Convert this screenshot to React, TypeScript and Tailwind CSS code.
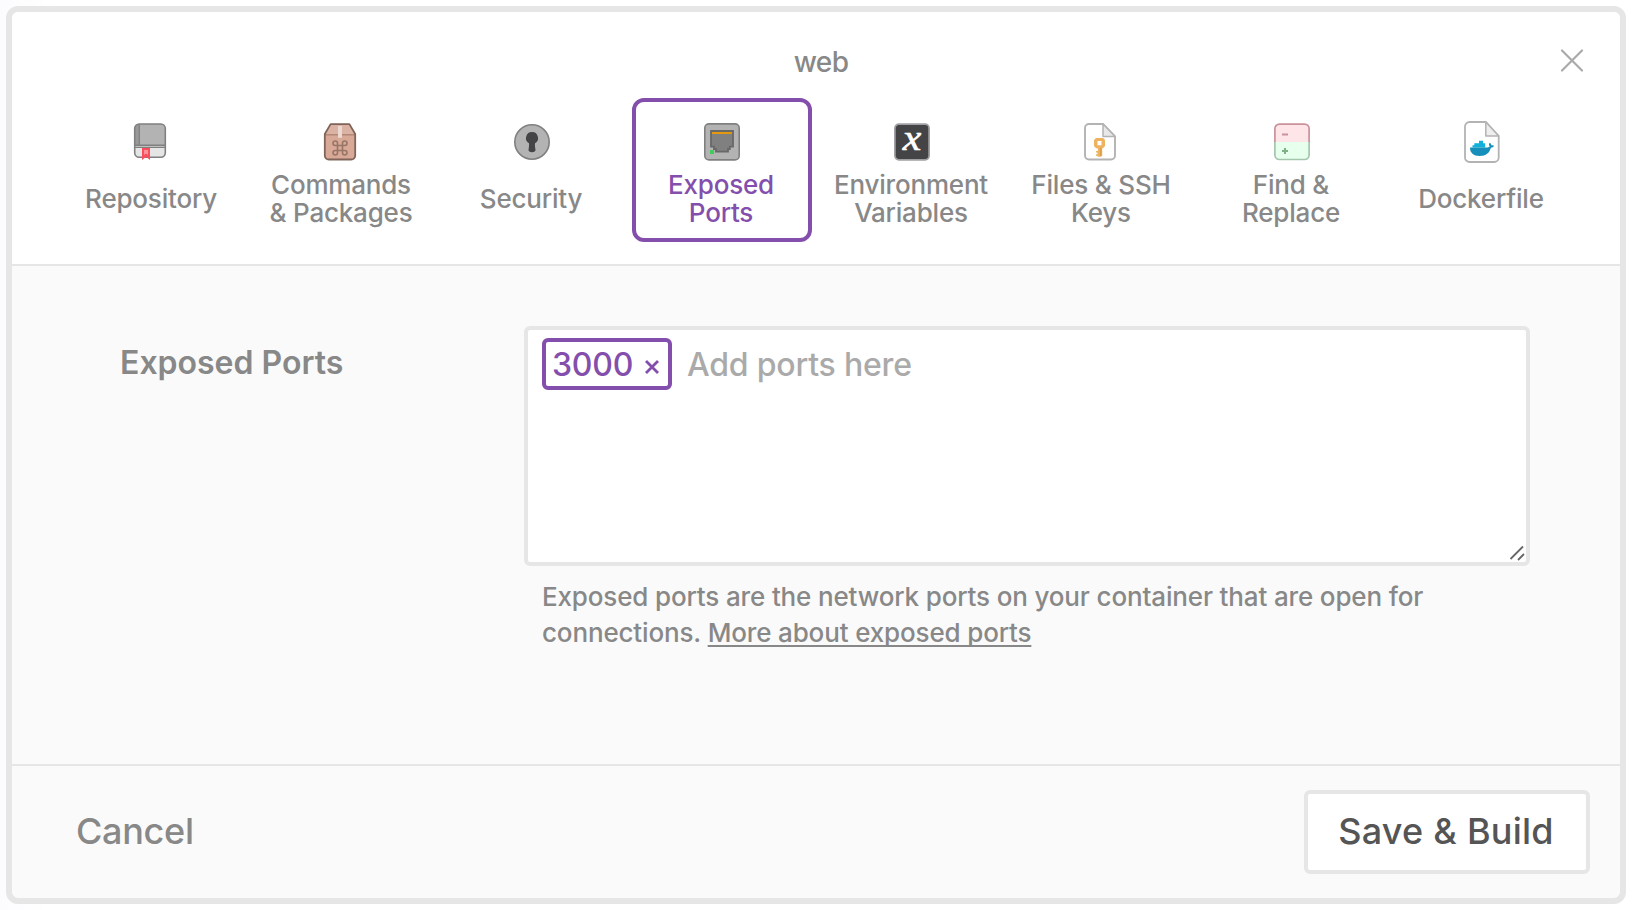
import type { ReactNode } from "react";

function Icon({ children }: { children: ReactNode }) {
  return (
    <svg width="40" height="40" viewBox="0 0 40 40" fill="none" className="block overflow-visible">
      {children}
    </svg>
  );
}

const RepositoryIcon = () => (
  <Icon>
    <path d="M3 25h30v7a3.500 3.500 0 0 1-3.500 3.500h-23A3.500 3.500 0 0 1 3 32z" fill="#e5e5e5" />
    <path d="M7 2h22a4 4 0 0 1 4 4v18H3V6a4 4 0 0 1 4-4z" fill="#b3b3b3" />
    <path d="M3 24V6a4 4 0 0 1 4-4v22z" fill="#999" />
    <rect x="2.700" y="2" width="30.600" height="33.300" rx="4.500" stroke="#808080" strokeWidth="1.600" />
    <path d="M7.300 2.500v20.500" stroke="#808080" strokeWidth="1.300" />
    <path d="M3 23.200h30M3 25.200h30" stroke="#808080" strokeWidth="1.400" />
    <path d="M10 26h8v12l-4-3.300-4 3.300z" fill="#fb4d5c" />
    <path d="M12 28h4v5l-2-1.500-2 1.500z" fill="#fc939c" />
  </Icon>
);

const PackageIcon = () => (
  <Icon>
    <path d="M8.500 2.100h19L33.200 12v21.500a4 4 0 0 1-4 4H6.800a4 4 0 0 1-4-4V12z" fill="#d7a996" />
    <path d="M8.500 2.100h19L33 12.500H3z" fill="#dbb3a5" />
    <path d="M3 12.700h30" stroke="#b48877" strokeWidth="1.600" />
    <path d="M16 4h4v11.700h-4z" fill="#ecd9d1" />
    <path d="M8.600 2.100h18.800L33.200 12v21.500a4 4 0 0 1-4 4H6.800a4 4 0 0 1-4-4V12z" stroke="#806459" strokeWidth="1.800" strokeLinejoin="round" />
    <path
      d="M15.500 23.500h5v5h-5zM15.500 23.500h-2.250a2.250 2.250 0 1 1 2.250-2.250zM20.500 23.500v-2.250a2.250 2.250 0 1 1 2.250 2.250zM20.500 28.500h2.250a2.250 2.250 0 1 1-2.250 2.250zM15.500 28.500v2.250a2.250 2.250 0 1 1-2.250-2.250z"
      stroke="#977567"
      strokeWidth="1.600"
    />
  </Icon>
);

const SecurityIcon = () => (
  <Icon>
    <circle cx="20" cy="20" r="17.200" fill="#b3b3b3" stroke="#808080" strokeWidth="1.600" />
    <path d="M20 10a6 6 0 0 1 3 11.200c-.3 2.300.2 4 .5 6.800 0 1.300-1.200 2.200-3.500 2.200s-3.500-.9-3.500-2.200c.3-2.800.8-4.500.5-6.800A6 6 0 0 1 20 10z" fill="#444446" />
  </Icon>
);

const PortIcon = () => (
  <Icon>
    <rect x="2.800" y="1.900" width="34.400" height="36" rx="4.200" fill="#b3b3b3" stroke="#808080" strokeWidth="1.600" />
    <path d="M9 9h22v15.600h-3.200V27H26v2.600H14V27h-2v-2.400H9z" fill="#808080" stroke="#686868" strokeWidth="1.800" />
    <path d="M10 10h20v2H10z" fill="#e2990f" />
    <path d="M8 28h4v4H8z" fill="#3fce5c" />
  </Icon>
);

const VariableIcon = () => (
  <Icon>
    <rect x="2.900" y="2.200" width="34.200" height="35.600" rx="4" fill="#444446" stroke="#a0a0a4" strokeWidth="1.700" />
    <text x="17.200" y="28" textAnchor="middle" fontSize="36" fill="#fff" stroke="#fff" strokeWidth="0.600" transform="scale(1.160 1)" className="font-['Liberation_Serif',serif] italic">
      x
    </text>
  </Icon>
);

const KeyFileIcon = () => (
  <Icon>
    <path d="M7 2h14l12 12.500V33.500a4 4 0 0 1-4 4H7a4 4 0 0 1-4-4V6a4 4 0 0 1 4-4z" fill="#fff" stroke="#b3b3b3" strokeWidth="1.900" />
    <path d="M21 2v12.500h12z" fill="#e8e8e8" stroke="#b3b3b3" strokeWidth="1.500" strokeLinejoin="round" />
    <path
      fillRule="evenodd"
      d="M14 16h7.200l1.800 2v6l-2 2.200h-.8v7.300l-1.200 1.200h-2.500l-2.400-1v-1.500h1.300v-1.600h-1.400v-1.500h1.800v-2.900H14l-2-2.200v-6zM15.500 19v4.300h4V19z"
      fill="#edb361"
    />
    <path d="M18.800 26v8" stroke="#d99b45" strokeWidth="1.300" />
  </Icon>
);

const DiffIcon = () => (
  <Icon>
    <path d="M3 20V6.500A4.500 4.500 0 0 1 7.500 2h25A4.500 4.500 0 0 1 37 6.500V20z" fill="#fde5e8" />
    <path d="M3 20v13.500A4.500 4.500 0 0 0 7.500 38h25a4.500 4.500 0 0 0 4.500-4.500V20z" fill="#e7ffed" />
    <path d="M2.900 20V6.600A4.500 4.500 0 0 1 7.400 2.100h25.200a4.500 4.500 0 0 1 4.500 4.500V20" stroke="#c9929b" strokeWidth="1.700" />
    <path d="M2.900 20v13a4.500 4.500 0 0 0 4.500 4.500h25.200a4.500 4.500 0 0 0 4.500-4.500V20" stroke="#a5c5ac" strokeWidth="1.700" />
    <path d="M10 12.500h6" stroke="#cc929b" strokeWidth="2" />
    <path d="M10 29h6M13 26v6" stroke="#7fb088" strokeWidth="2" />
  </Icon>
);

const DockerFileIcon = () => (
  <Icon>
    <path d="M7.500 0h16.300L36.700 14v21.500a4.500 4.500 0 0 1-4.500 4.500H7.500A4.500 4.500 0 0 1 3 35.500v-31A4.500 4.500 0 0 1 7.500 0z" fill="#fff" stroke="#b3b3b3" strokeWidth="1.800" />
    <path d="M23.800 0v14h12.900z" fill="#eee" stroke="#b3b3b3" strokeWidth="1.500" strokeLinejoin="round" />
    <path d="M10.500 25.500v-2.300h1.800v-2h4.700v-2.500h4v2.500h2.200v4.300z" fill="#12afd8" />
    <path d="M8 25.500h17.500c1.300 0 2-.5 2.200-1.200-1.100-1.300-.8-2.800.1-3.500 1 .7 1.500 1.500 1.500 2.500.9-.3 1.900-.2 2.800.5-.6 1.300-1.700 1.900-3.200 2C27.400 31 24 34 17.700 34 11.500 34 8 31 8 25.500z" fill="#168fbb" />
  </Icon>
);

const tabs: { lines: string[]; icon: ReactNode; active?: boolean }[] = [
  { lines: ["Repository"], icon: <RepositoryIcon /> },
  { lines: ["Commands", "& Packages"], icon: <PackageIcon /> },
  { lines: ["Security"], icon: <SecurityIcon /> },
  { lines: ["Exposed", "Ports"], icon: <PortIcon />, active: true },
  { lines: ["Environment", "Variables"], icon: <VariableIcon /> },
  { lines: ["Files & SSH", "Keys"], icon: <KeyFileIcon /> },
  { lines: ["Find &", "Replace"], icon: <DiffIcon /> },
  { lines: ["Dockerfile"], icon: <DockerFileIcon /> },
];

export default function App() {
  return (
    <div className="h-[910px] w-[1634px] bg-white bg-linear-to-r from-[#fcfbfe] from-0% to-white to-[3%] p-1.5 pr-2 font-['Inter',sans-serif] text-[#888]">
      <div className="flex h-[898px] flex-col overflow-hidden rounded-xl border-6 border-[#e6e6e6] bg-[#fafafa]">
        <header className="relative border-b-2 border-[#e6e6e6] bg-white pt-9 pr-10 pb-[22px] pl-[50px]">
          <h1 className="text-center text-[28px] leading-7 font-[450] tracking-[-0.6px]">web</h1>
          <button aria-label="Close" className="absolute top-9 right-9">
            <svg width="24" height="24" viewBox="0 0 24 24" stroke="#aaa" strokeWidth="2.200" strokeLinecap="round">
              <path d="M2 2.500l20 20M22 2.500L2 22.500" />
            </svg>
          </button>
          <nav className="mt-[22px] flex gap-2.5">
            {tabs.map((tab) => (
              <button
                key={tab.lines[0]}
                className={
                  tab.active
                    ? "flex h-36 w-[180px] shrink-0 flex-col items-center rounded-xl border-4 border-[#844fac] pt-5 text-[#844fac]"
                    : "flex h-36 w-[180px] shrink-0 flex-col items-center rounded-xl border-4 border-transparent pt-5"
                }
              >
                {tab.icon}
                <span className="mt-[9px] flex h-14 flex-col justify-center pr-0.5 text-[26px] leading-7 font-[450] tracking-[-0.2px] whitespace-nowrap">
                  {tab.lines.map((line) => (
                    <span key={line}>{line}</span>
                  ))}
                </span>
              </button>
            ))}
          </nav>
        </header>

        <main className="flex flex-1 pt-[60px] pl-[108px]">
          <label className="w-[404px] pt-[17px] text-[32px] leading-10 font-semibold">Exposed Ports</label>
          <div>
            <div className="relative flex h-60 w-[1006px] items-start rounded-md border-4 border-[#e6e6e6] bg-white pt-2 pl-3.5">
              <span className="flex h-[52px] w-[130px] items-center rounded-md border-4 border-[#844fac] pt-0.5 pl-1.5 text-[32px] leading-[44px] font-[450] tracking-[-0.2px] text-[#844fac]">
                3000
                <svg width="16" height="16" viewBox="0 0 16 16" stroke="#844fac" strokeWidth="2.800" className="mt-[3px] ml-[11px]">
                  <path d="M2 2l12 12M14 2L2 14" />
                </svg>
              </span>
              <span className="pt-px pl-[15px] text-[32px] leading-[52px] font-[450] tracking-[-0.2px] text-[#aaa]">Add ports here</span>
              <svg width="16" height="16" viewBox="0 0 16 16" stroke="#666" strokeWidth="1.800" className="absolute right-px bottom-px">
                <path d="M1.500 14L14 1.500M9 15l6-6" />
              </svg>
            </div>
            <p className="mt-[13px] pl-[18px] text-[26px] leading-9 font-[450] tracking-[-0.15px]">
              Exposed ports are the network ports on your container that are open for
              <br />
              connections.{" "}
              <a className="underline decoration-2 underline-offset-3 [text-decoration-skip-ink:none]">More about exposed ports</a>
            </p>
          </div>
        </main>

        <footer className="flex h-[134px] items-center justify-between border-t-2 border-[#e6e6e6] pr-[30px] pl-16 text-4xl font-[550]">
          <button className="pb-0.5 tracking-[-0.3px]">Cancel</button>
          <button className="h-[84px] w-[286px] rounded-md border-4 border-[#e6e6e6] bg-white pr-0.5 pb-0.5 tracking-[0.25px] text-[#555]">
            Save &amp; Build
          </button>
        </footer>
      </div>
    </div>
  );
}
